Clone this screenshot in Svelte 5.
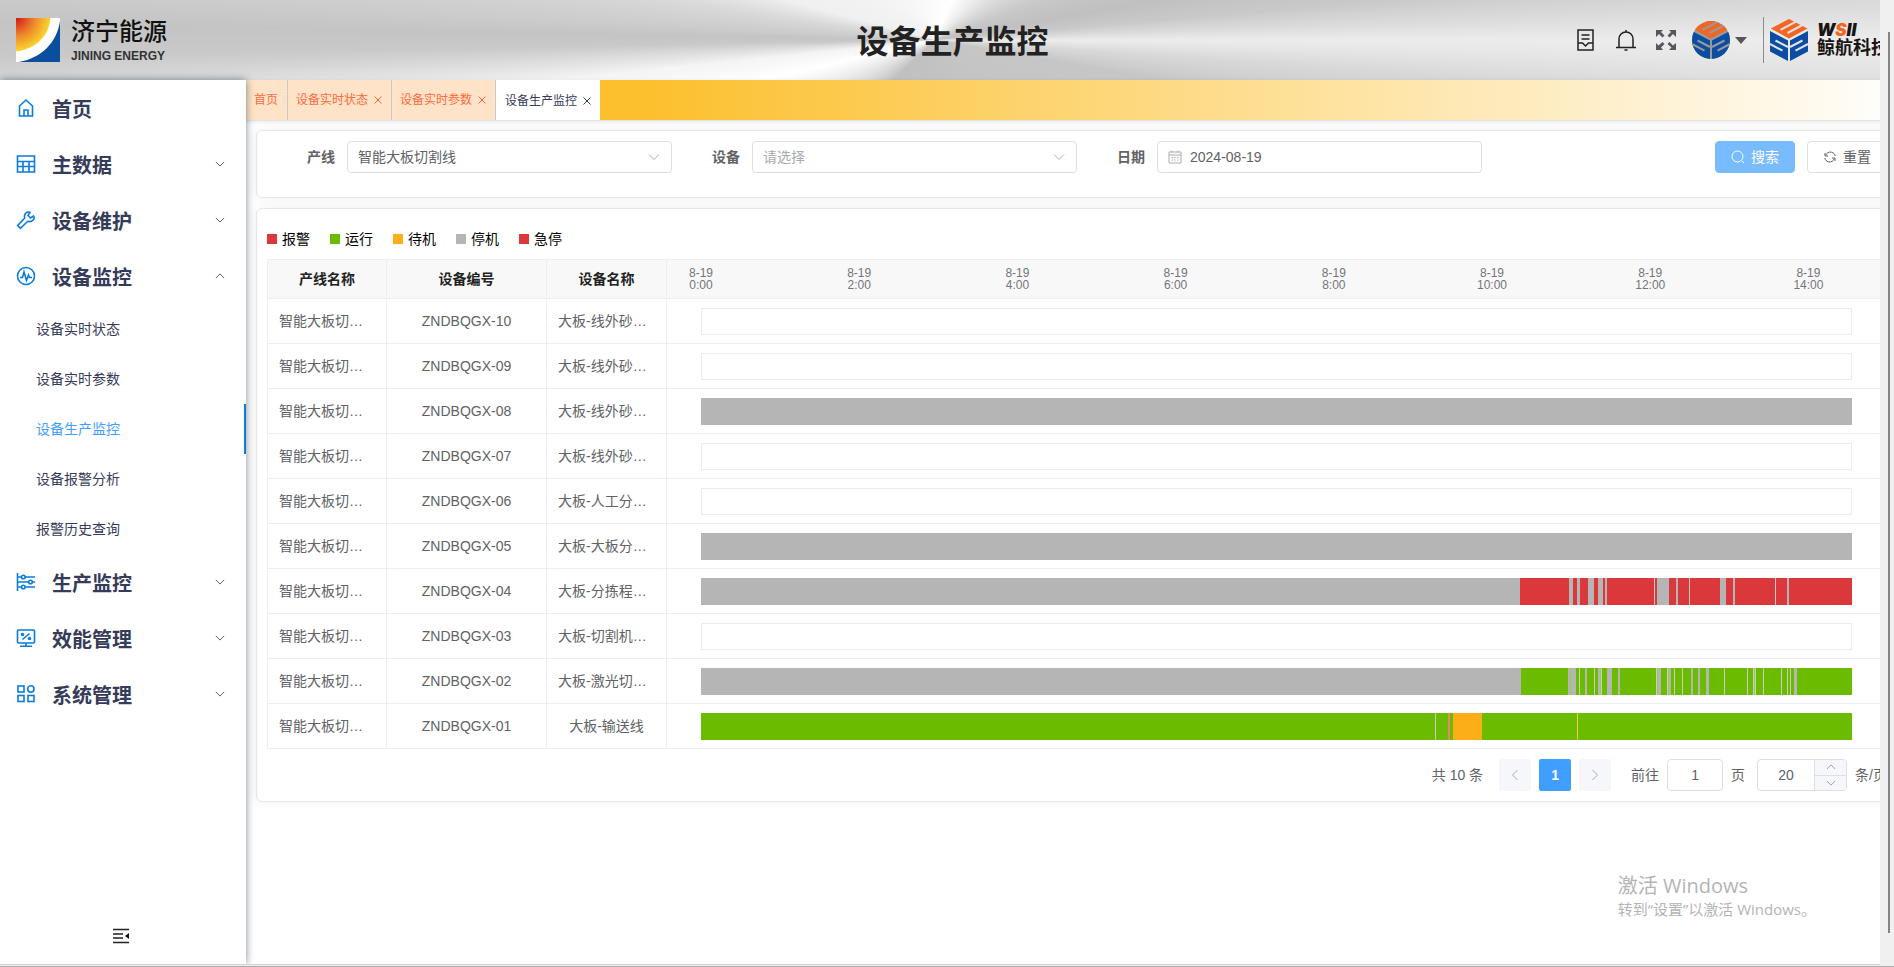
<script>
  let line = "智能大板切割线";
  let device = "";
  let date = "2024-08-19";
  let page = 1;
  let pageSize = 20;

  const menus = [
    { name: "首页", icon: "home" },
    { name: "主数据", icon: "grid", arrow: "down" },
    { name: "设备维护", icon: "wrench", arrow: "down" },
    {
      name: "设备监控",
      icon: "pulse",
      arrow: "up",
      children: ["设备实时状态", "设备实时参数", "设备生产监控", "设备报警分析", "报警历史查询"]
    },
    { name: "生产监控", icon: "sliders", arrow: "down" },
    { name: "效能管理", icon: "screen", arrow: "down" },
    { name: "系统管理", icon: "apps", arrow: "down" }
  ];

  let active = "设备生产监控";

  const tabs = ["首页", "设备实时状态", "设备实时参数", "设备生产监控"];

  const legend = [
    { name: "报警", state: "alarm" },
    { name: "运行", state: "run" },
    { name: "待机", state: "idle" },
    { name: "停机", state: "stop" },
    { name: "急停", state: "alarm" }
  ];

  // length of the time axis in bar units, and the hours it covers
  const total = 1151;
  const hours = 14.55;
  const step = 200 / hours;
  const ticks = [0, 2, 4, 6, 8, 10, 12, 14];

  // two states taking turns, given the end of every segment
  function alternate(a, b, ends) {
    let start = 0;
    return ends.map((end, i) => {
      const seg = { state: i % 2 ? b : a, length: end - start };
      start = end;
      return seg;
    });
  }

  const full = [{ state: "stop", length: total }];

  const rows = [
    { code: "ZNDBQGX-10", name: "大板-线外砂…", segs: [] },
    { code: "ZNDBQGX-09", name: "大板-线外砂…", segs: [] },
    { code: "ZNDBQGX-08", name: "大板-线外砂…", segs: full },
    { code: "ZNDBQGX-07", name: "大板-线外砂…", segs: [] },
    { code: "ZNDBQGX-06", name: "大板-人工分…", segs: [] },
    { code: "ZNDBQGX-05", name: "大板-大板分…", segs: full },
    {
      code: "ZNDBQGX-04",
      name: "大板-分拣程…",
      segs: alternate("stop", "alarm", [
        819, 868, 872, 876, 879, 887, 893, 897, 902, 904, 906, 953, 954, 956, 968, 975, 977, 988, 989,
        1019, 1025, 1032, 1034, 1074, 1075, 1086, 1088, 1151
      ])
    },
    { code: "ZNDBQGX-03", name: "大板-切割机…", segs: [] },
    {
      code: "ZNDBQGX-02",
      name: "大板-激光切…",
      segs: alternate("stop", "run", [
        820, 867, 869, 870, 875, 878, 879, 884, 886, 893, 894, 897, 899, 900, 901, 906, 911, 917, 919,
        955, 956, 957, 960, 966, 967, 968, 970, 973, 974, 981, 982, 990, 992, 997, 999, 1005, 1008, 1023,
        1024, 1046, 1047, 1052, 1053, 1054, 1055, 1062, 1063, 1080, 1081, 1086, 1087, 1089, 1090, 1093,
        1096, 1151
      ])
    },
    {
      code: "ZNDBQGX-01",
      name: "大板-输送线",
      segs: [
        { state: "run", length: 734 },
        { state: "stop", length: 1 },
        { state: "run", length: 12 },
        { state: "warn", length: 2 },
        { state: "run", length: 3 },
        { state: "idle", length: 29 },
        { state: "run", length: 95 },
        { state: "idle", length: 1 },
        { state: "run", length: 274 }
      ]
    }
  ];
</script>

{#snippet chevron(dir)}
  <svg class="chevron {dir}" viewBox="0 0 12 12" width="12" height="12">
    <path d="M1 3.5 6 8.5 11 3.5" />
  </svg>
{/snippet}

{#snippet cube()}
  <path fill="#f26522" d="M19 0 37.5 9.6 19 19.4 .8 9.6z" />
  <path fill="#0b4da2" d="M0 12 18 21.4V42L0 32.4zM38 12 20 21.4V42l18-9.6z" />
  <path class="cut" d="M26 2.6 10.5 10.8M32.5 6 17.5 14M18 28 5.5 21.5M0 25 12.5 31.6M20 28l12.5-6.5M38 25l-12.5 6.6" />
{/snippet}

<div class="window">
  <div class="viewport">
    <div class="stage">
      <header>
        <div class="brand">
          <svg width="44" height="44" viewBox="0 0 44 44">
            <defs>
              <radialGradient id="sun" cx="0" cy="0" r="1">
                <stop offset="0" stop-color="#d7141a" />
                <stop offset=".55" stop-color="#ee8a2a" />
                <stop offset="1" stop-color="#fbd72f" />
              </radialGradient>
            </defs>
            <path fill="#fff" d="M0 0h44v6C41 26 25 42 4 44H0z" />
            <path fill="url(#sun)" d="M0 0h34.5C33 18 20 31 0 33.5z" />
            <path fill="#0a4f9e" d="M44 3v41H3C26 40 41 24 44 3z" />
          </svg>
          <div class="brand-text">
            <strong>济宁能源</strong>
            <span>JINING ENERGY</span>
          </div>
        </div>

        <h1>设备生产监控</h1>

        <div class="tools">
          <button aria-label="单据">
            <svg width="20" height="24" viewBox="0 0 20 24">
              <path d="M2 2h15v20H2zM5.5 7h8M5.5 11h8M2 15h4.5l3 3 3-3H17" />
            </svg>
          </button>
          <button aria-label="通知">
            <svg width="20" height="24" viewBox="0 0 20 24">
              <path d="M0 19.5h20M3 19.5V11c0-4 3-7 7-7s7 3 7 7v8.5M10 4V2M8.5 22h3" />
            </svg>
          </button>
          <button aria-label="全屏">
            <svg class="solid" width="20" height="20" viewBox="0 0 20 20">
              <path d="M0 0h7L5 2l3.5 3.5-2 2L3 4 0 7zM20 0v7l-3-3-3.500 3.500-2-2L15 2l-2-2zM0 20v-7l2.500 2.500L6.500 12l2 2L5 17.500 7 20zM20 20h-7l2.500-2.500L11.500 14l2-2 3.500 3.500L20 13z" />
            </svg>
          </button>
          <button class="user" aria-label="用户">
            <svg class="avatar" width="38" height="38" viewBox="0 0 38 38">
              <defs><clipPath id="round"><circle cx="19" cy="19" r="19" /></clipPath></defs>
              <circle cx="19" cy="19" r="19" fill="#999" />
              <g clip-path="url(#round)"><g transform="translate(0 -2)">{@render cube()}</g></g>
            </svg>
            <svg class="solid" width="12" height="7" viewBox="0 0 12 7"><path d="M0 0h12L6 7z" /></svg>
          </button>
          <div class="partner">
            <svg class="mark" width="38" height="42" viewBox="0 0 38 42">{@render cube()}</svg>
            <div class="partner-text">
              <em>W<b>S</b>II</em>
              <strong>鲸航科技</strong>
            </div>
          </div>
        </div>
      </header>

      <div class="body">
        <aside>
          <nav>
            {#each menus as menu}
              <button class="menu">
                <svg class="icon" width="20" height="20" viewBox="0 0 20 20">
                  {#if menu.icon === "home"}
                    <path d="M3.500 18V8L10 2l6.500 6v10zM8 18v-6h4v6" />
                  {:else if menu.icon === "grid"}
                    <path d="M1.500 2h17v16h-17zM1.500 7.500h17M1.500 12.500h17M7 7.500V18M13 7.500V18" />
                  {:else if menu.icon === "wrench"}
                    <path d="M17.500 6 14.500 8 12 5.500 14 2.300C11 1 7.500 4 8.700 8L1.700 15.500 4.500 18.300 11.700 11.300C16 12.500 19.500 9 17.500 6z" />
                  {:else if menu.icon === "pulse"}
                    <circle cx="10" cy="10" r="8.500" />
                    <path d="M4 11.500h2.500L8 6l2.500 8.500L12.500 9l1 2.500H16" />
                  {:else if menu.icon === "sliders"}
                    <path d="M1.500 1v18M1.500 5h4M9 5h10M1.500 10h11M16.500 10H19M1.500 15h4M9 15h10" />
                    <circle cx="7.300" cy="5" r="1.800" />
                    <circle cx="14.500" cy="10" r="1.800" />
                    <circle cx="7.300" cy="15" r="1.800" />
                  {:else if menu.icon === "screen"}
                    <rect x="1.500" y="2" width="17" height="13" rx="1" />
                    <path d="M10 15v3M4 18.200h12M6.500 11.500l7-6" />
                    <circle cx="6.500" cy="6.500" r="1" />
                    <circle cx="13.500" cy="10.500" r="1" />
                  {:else}
                    <rect x="2" y="2" width="6" height="6" />
                    <circle cx="14.800" cy="5" r="3.200" />
                    <rect x="2" y="11.500" width="6" height="6" />
                    <rect x="12" y="11.500" width="6" height="6" />
                  {/if}
                </svg>
                <span>{menu.name}</span>
                {#if menu.arrow}{@render chevron(menu.arrow)}{/if}
              </button>
              {#if menu.children}
                {#each menu.children as child}
                  <button class="child" class:active={child === active} on:click={() => (active = child)}>{child}</button>
                {/each}
              {/if}
            {/each}
          </nav>
          <button class="collapse" aria-label="收起菜单">
            <svg width="16" height="16" viewBox="0 0 16 16">
              <path d="M0 1.500h16M0 6h10M0 10h10M0 14.500h16" />
              <path class="fill" d="M16 5v6l-4-3z" />
            </svg>
          </button>
        </aside>

        <main>
          <div class="tabs">
            {#each tabs as tab, i}
              <a href="#{i}" class:current={i === 3}>
                {tab}
                {#if i > 0}
                  <svg width="8" height="8" viewBox="0 0 8 8"><path d="M.5 .5l7 7M7.500 .5l-7 7" /></svg>
                {/if}
              </a>
            {/each}
          </div>

          <div class="content">
            <form class="card search" on:submit|preventDefault>
              <label for="line">产线</label>
              <div class="field">
                <select id="line" bind:value={line}>
                  <option value="智能大板切割线">智能大板切割线</option>
                </select>
                {@render chevron("down")}
              </div>
              <label for="device">设备</label>
              <div class="field">
                <select id="device" class:empty={!device} bind:value={device}>
                  <option value="">请选择</option>
                </select>
                {@render chevron("down")}
              </div>
              <label for="date">日期</label>
              <div class="field">
                <svg class="calendar" width="14" height="14" viewBox="0 0 14 14">
                  <path d="M1 2h12v11H1zM1 5h12M4 .5v2M10 .5v2M3.500 7.500h1.500M6.200 7.500h1.500M9 7.500h1.500M3.500 10h1.500M6.200 10h1.500M9 10h1.500" />
                </svg>
                <input id="date" type="text" bind:value={date} />
              </div>
              <div class="actions">
                <button class="primary">
                  <svg width="14" height="14" viewBox="0 0 14 14"><path d="M11 11l2 2" /><circle cx="6.500" cy="6.500" r="5.500" /></svg>
                  搜索
                </button>
                <button type="button">
                  <svg width="14" height="14" viewBox="0 0 14 14">
                    <path d="M2 3v3h3M2.500 5.500C3.500 3 6 1.500 8.500 2.200 10.500 2.600 12 4.200 12.200 6M12 11V8H9M11.500 8.500C10.500 11 8 12.500 5.500 11.800 3.500 11.400 2 9.800 1.800 8" />
                  </svg>
                  重置
                </button>
              </div>
            </form>

            <section class="card">
              <ul class="legend">
                {#each legend as item}
                  <li><i class={item.state}></i>{item.name}</li>
                {/each}
              </ul>

              <table>
                <colgroup>
                  <col class="first" />
                  <col class="wide" />
                  <col class="narrow" />
                  <col />
                </colgroup>
                <thead>
                  <tr>
                    <th>产线名称</th>
                    <th>设备编号</th>
                    <th>设备名称</th>
                    <th class="time">
                      <div class="axis" style="margin-left: {-step / 2}%; margin-right: {step / 2}%">
                        {#each ticks as hour}
                          <span style="width: {step}%">8-19<br />{hour}:00</span>
                        {/each}
                      </div>
                    </th>
                  </tr>
                </thead>
                <tbody>
                  {#each rows as row}
                    <tr>
                      <td class="clipped">{line}</td>
                      <td>{row.code}</td>
                      <td class:clipped={row.name.endsWith("…")}>{row.name}</td>
                      <td class="time">
                        <div class="bar" class:blank={!row.segs.length}>
                          {#each row.segs as seg}
                            <i class={seg.state} class:thin={seg.length === 1} style="width: {(seg.length / total) * 100}%"></i>
                          {/each}
                        </div>
                      </td>
                    </tr>
                  {/each}
                </tbody>
              </table>

              <div class="pager">
                <span class="count">共 10 条</span>
                <button disabled aria-label="上一页">{@render chevron("left")}</button>
                <button class="on">1</button>
                <button disabled aria-label="下一页">{@render chevron("right")}</button>
                <label for="goto" class="goto">前往</label>
                <input id="goto" class="box" type="number" bind:value={page} />
                <span>页</span>
                <div class="stepper">
                  <input id="size" type="number" aria-label="每页条数" bind:value={pageSize} />
                  <div class="steps">
                    <button aria-label="增加" on:click={() => (pageSize += 1)}>{@render chevron("up")}</button>
                    <button aria-label="减少" on:click={() => (pageSize -= 1)}>{@render chevron("down")}</button>
                  </div>
                </div>
                <label for="size">条/页</label>
              </div>
            </section>
          </div>
        </main>
      </div>
    </div>
  </div>
  <div class="gutter"><div class="thumb"></div></div>
  <div class="watermark">
    <p>激活 Windows</p>
    <small>转到“设置”以激活 Windows。</small>
  </div>
</div>

<style>
  :global(body) {
    overflow: hidden;
    background: #efefef;
  }

  .window {
    position: relative;
    display: flex;
    height: 100vh;
    box-sizing: border-box;
    border-bottom: 1px solid #adadad;
    padding-bottom: 1px;
    font: 14px/20px "Liberation Sans", "Noto Sans CJK SC", sans-serif;
    color: #606266;
  }

  .viewport {
    flex: 1;
    min-width: 0;
    overflow: hidden;
    background: #fff;
    border-bottom: 1px solid #d2d2d2;
  }

  /* the page is a little wider than the window that shows it */
  .stage {
    display: flex;
    flex-direction: column;
    width: calc(100% + 28px);
    height: 100%;
  }

  .gutter {
    width: 14px;
    padding: 32px 0;
    background: #f0f0f0;
  }

  .thumb {
    width: 2px;
    height: 100%;
    margin-left: 8px;
    background: #858585;
  }

  button {
    font: inherit;
    color: inherit;
    margin: 0;
    padding: 0;
    border: 0;
    background: none;
    cursor: pointer;
  }

  svg {
    display: block;
    flex: none;
    fill: none;
    stroke: currentColor;
  }

  header {
    display: grid;
    grid-template-columns: 1fr auto 1fr;
    align-items: center;
    flex: none;
    height: 80px;
    box-sizing: border-box;
    padding: 0 19px 0 16px;
    background: conic-gradient(
      from 0deg at 49% 50%,
      #fcfcfc 0deg,
      #ffffff 23deg,
      #ececec 45deg,
      #c8c8c8 70deg,
      #c0c0c0 80deg,
      #c9c9c9 85deg,
      #dcdcdc 88deg,
      #ececec 90deg,
      #e8e8e8 91deg,
      #d8d8d8 94deg,
      #c6c6c6 100deg,
      #c0c0c0 226deg,
      #ffffff 257deg,
      #f4f4f4 264deg,
      #dcdcdc 267deg,
      #c9c9c9 269deg,
      #c4c4c4 271deg,
      #cccccc 273deg,
      #d8d8d8 278deg,
      #f0f0f0 285deg,
      #fcfcfc 360deg
    );
  }

  .brand {
    display: flex;
    align-items: center;
    gap: 11px;
    color: #111;
  }

  .brand svg,
  .partner svg,
  .avatar {
    stroke: none;
  }

  .brand-text {
    display: flex;
    flex-direction: column;
    gap: 4px;
  }

  .brand-text strong {
    font-size: 24px;
    line-height: 28px;
    font-weight: 500;
  }

  .brand-text span {
    font-size: 12px;
    line-height: 12px;
    font-weight: bold;
    color: #333;
  }

  h1 {
    margin: 0;
    padding-top: 4px;
    font-size: 32px;
    line-height: 40px;
    color: #222;
  }

  .tools {
    display: flex;
    align-items: center;
    justify-content: flex-end;
    gap: 20px;
    color: #222;
  }

  .tools button svg {
    stroke-width: 1.5;
  }

  .tools svg.solid {
    fill: #55575c;
    stroke: none;
  }

  .user {
    display: flex;
    align-items: center;
    gap: 5px;
    margin-left: -4px;
  }

  .cut {
    stroke: #e2e2e2;
    stroke-width: 2;
  }

  .avatar .cut {
    stroke: #999;
  }

  .partner {
    display: flex;
    align-items: center;
    gap: 9px;
    height: 46px;
    padding-left: 6px;
    margin-left: -4px;
    border-left: 1px solid #8c8c8c;
  }

  .partner-text {
    display: flex;
    flex-direction: column;
    color: #1a1414;
    white-space: nowrap;
  }

  .partner-text em {
    font-family: Inter, "Liberation Sans", sans-serif;
    font-size: 17px;
    line-height: 16px;
    font-weight: 900;
  }

  .partner-text em b {
    color: #f26522;
    font-weight: 900;
  }

  .partner-text strong {
    font-size: 18px;
    line-height: 20px;
  }

  .body {
    display: flex;
    flex: 1;
    min-height: 0;
  }

  aside {
    position: relative;
    z-index: 1;
    display: flex;
    flex-direction: column;
    justify-content: space-between;
    flex: none;
    width: 246px;
    background: #fff;
    box-shadow: 0 0 8px rgba(0, 21, 41, 0.5);
  }

  .menu {
    display: flex;
    align-items: center;
    width: 100%;
    height: 56px;
    padding: 0 21px 0 16px;
    font-size: 20px;
    font-weight: bold;
    color: #363b59;
  }

  .menu span {
    flex: 1;
    margin-left: 16px;
    padding-top: 3px;
    text-align: left;
  }

  .menu .chevron {
    width: 10px;
    height: 10px;
  }

  .icon {
    stroke: #0b7bdc;
    stroke-width: 1.6;
  }

  .chevron.up {
    transform: rotate(180deg);
  }

  .chevron.left {
    transform: rotate(90deg);
  }

  .chevron.right {
    transform: rotate(-90deg);
  }

  .child {
    display: block;
    width: 100%;
    height: 50px;
    padding-left: 36px;
    text-align: left;
    color: #363b59;
  }

  .child.active {
    color: #409eff;
    border-right: 2px solid #0b7bdc;
  }

  .collapse {
    align-self: center;
    padding: 20px 20px 20px 16px;
    color: #222;
  }

  .collapse svg {
    stroke-width: 1.6;
  }

  .collapse .fill {
    fill: #111;
    stroke: none;
  }

  main {
    flex: 1;
    min-width: 0;
  }

  .tabs {
    display: flex;
    height: 40px;
    border-bottom: 1px solid #e4e4e8;
    background: linear-gradient(90deg, #fcc02e 24%, #fffdf8 98%);
    box-shadow: 0 1px 4px rgba(0, 0, 0, 0.1);
  }

  .tabs a {
    display: flex;
    align-items: center;
    gap: 6px;
    padding: 0 9px 0 8px;
    border-right: 1px solid #c8c8c8;
    background: #ffe3c8;
    color: #ff6a3d;
    font-size: 12px;
    text-decoration: none;
  }

  .tabs a.current {
    padding: 2px 9px 0;
    border-right: 0;
    background: #fff;
    color: #363b59;
  }

  .content {
    display: flex;
    flex-direction: column;
    gap: 10px;
    padding: 9px 10px;
  }

  .card {
    padding: 10px;
    border: 1px solid #e4e7ed;
    border-radius: 6px;
    background: #fff;
    box-shadow: 0 0 12px rgba(0, 0, 0, 0.06);
  }

  .search {
    display: flex;
    align-items: center;
    padding-bottom: 24px;
  }

  .search label {
    width: 80px;
    box-sizing: border-box;
    padding-right: 12px;
    text-align: right;
    font-weight: bold;
  }

  .field {
    display: flex;
    align-items: center;
    gap: 8px;
    flex: 0 1 325px;
    height: 32px;
    box-sizing: border-box;
    padding: 0 11px 0 10px;
    border: 1px solid #dcdfe6;
    border-radius: 4px;
    color: #a8abb2;
  }

  select,
  input {
    flex: 1;
    min-width: 0;
    height: 100%;
    padding: 0;
    border: 0;
    outline: 0;
    background: none;
    appearance: none;
    font: inherit;
    color: #606266;
  }

  select.empty {
    color: #a8abb2;
  }

  .actions {
    display: flex;
    gap: 12px;
    margin-left: auto;
  }

  .actions button {
    display: flex;
    align-items: center;
    justify-content: center;
    gap: 6px;
    width: 80px;
    height: 32px;
    border: 1px solid #dcdfe6;
    border-radius: 4px;
  }

  .actions button.primary {
    border-color: #79bbff;
    background: #79bbff;
    color: #fff;
  }

  .legend {
    display: flex;
    gap: 20px;
    height: 40px;
    margin: 0;
    padding: 0;
    list-style: none;
    color: #000;
  }

  .legend li {
    display: flex;
    align-items: center;
    gap: 5px;
  }

  .legend i {
    width: 10px;
    height: 10px;
  }

  .alarm {
    background: #db383c;
  }

  .run {
    background: #6bbb00;
  }

  .idle {
    background: #fcae18;
  }

  .stop {
    background: #b5b5b5;
  }

  .warn {
    background: #e5896a;
  }

  table {
    width: 100%;
    table-layout: fixed;
    border-spacing: 0;
    border-top: 1px solid #ebeef5;
    border-left: 1px solid #ebeef5;
  }

  .first {
    width: 119px;
  }

  .narrow {
    width: 120px;
  }

  .wide {
    width: 160px;
  }

  th,
  td {
    height: 44px;
    padding: 0 11px;
    border-right: 1px solid #ebeef5;
    border-bottom: 1px solid #ebeef5;
    text-align: center;
    white-space: nowrap;
  }

  th {
    height: 38px;
    background: #f8f8f9;
    color: #222;
  }

  td.clipped {
    overflow: hidden;
    text-overflow: ellipsis;
    text-align: left;
  }

  th.time,
  td.time {
    padding: 0 34px;
  }

  .axis {
    display: flex;
    font-size: 12px;
    line-height: 12px;
    font-weight: normal;
    color: #73767a;
  }

  .axis span {
    flex: none;
  }

  .bar {
    display: flex;
    height: 27px;
  }

  .bar.blank {
    box-sizing: border-box;
    border: 1px solid #ebebeb;
  }

  .bar i {
    flex: none;
  }

  .bar i.thin {
    opacity: 0.7;
  }

  .pager {
    display: flex;
    align-items: center;
    justify-content: flex-end;
    gap: 8px;
    margin-top: 10px;
  }

  .pager > button {
    display: flex;
    align-items: center;
    justify-content: center;
    width: 32px;
    height: 32px;
    border-radius: 2px;
    background: #f5f7fa;
    color: #a8abb2;
  }

  .pager > button.on {
    background: #409eff;
    color: #fff;
    font-weight: bold;
  }

  .count {
    margin-right: 8px;
  }

  .goto {
    margin-left: 12px;
  }

  .pager input {
    text-align: center;
    appearance: textfield;
  }

  .pager input::-webkit-inner-spin-button,
  .pager input::-webkit-outer-spin-button {
    appearance: none;
    margin: 0;
  }

  .pager input.box {
    flex: none;
    width: 56px;
    height: 32px;
    box-sizing: border-box;
    border: 1px solid #dcdfe6;
    border-radius: 4px;
  }

  .stepper {
    display: flex;
    width: 90px;
    height: 32px;
    box-sizing: border-box;
    margin-left: 4px;
    border: 1px solid #dcdfe6;
    border-radius: 4px;
    overflow: hidden;
  }

  .steps {
    display: flex;
    flex-direction: column;
    width: 31px;
    border-left: 1px solid #dcdfe6;
    background: #f5f7fa;
  }

  .steps button {
    display: flex;
    align-items: center;
    justify-content: center;
    flex: 1;
    color: #909399;
  }

  .steps button + button {
    border-top: 1px solid #dcdfe6;
  }

  .steps .chevron {
    width: 10px;
    height: 10px;
  }

  .watermark {
    position: absolute;
    right: 78px;
    bottom: 46px;
    z-index: 2;
    color: #b4b4b4;
    font-family: "Open Sans", "Noto Sans CJK SC", sans-serif;
    pointer-events: none;
  }

  .watermark p {
    margin: 0;
    font-size: 20px;
    line-height: 26px;
  }

  .watermark small {
    font-size: 15px;
    line-height: 20px;
  }
</style>
